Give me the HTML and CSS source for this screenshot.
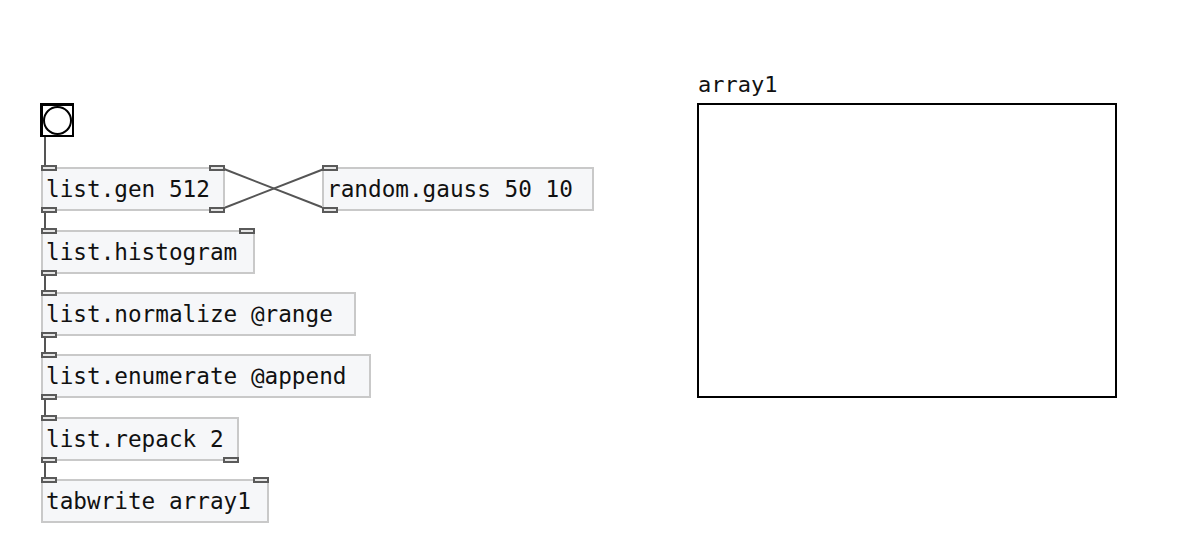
FILE: index.html
```html
<!DOCTYPE html>
<html>
<head>
<meta charset="utf-8">
<link rel="stylesheet" href="styles.css">
</head>
<body>
<div class="canvas">
  <svg class="cords" width="1198" height="557" viewBox="0 0 1198 557">
    <g stroke="#555" stroke-width="2" fill="none">
      <line x1="45" y1="136" x2="45" y2="168"/>
      <line x1="45" y1="210" x2="45" y2="231"/>
      <line x1="45" y1="273" x2="45" y2="293"/>
      <line x1="45" y1="336" x2="45" y2="355"/>
      <line x1="45" y1="398" x2="45" y2="418"/>
      <line x1="45" y1="460" x2="45" y2="480"/>
      <line x1="224" y1="169" x2="324" y2="208"/>
      <line x1="224" y1="208" x2="324" y2="169"/>
    </g>
  </svg>

  <div class="bang"><div class="bang-circle"></div></div>

  <div class="obj" style="left:41px;top:167px;width:184px;">list.gen 512
    <span class="io in l"></span><span class="io in r"></span>
    <span class="io out l"></span><span class="io out r"></span>
  </div>
  <div class="obj" style="left:322px;top:167px;width:272px;">random.gauss 50 10
    <span class="io in l"></span><span class="io out l"></span>
  </div>
  <div class="obj" style="left:41px;top:230px;width:214px;">list.histogram
    <span class="io in l"></span><span class="io in r"></span>
    <span class="io out l"></span>
  </div>
  <div class="obj" style="left:41px;top:292px;width:315px;">list.normalize @range
    <span class="io in l"></span><span class="io out l"></span>
  </div>
  <div class="obj" style="left:41px;top:354px;width:330px;">list.enumerate @append
    <span class="io in l"></span><span class="io out l"></span>
  </div>
  <div class="obj" style="left:41px;top:417px;width:198px;">list.repack 2
    <span class="io in l"></span>
    <span class="io out l"></span><span class="io out r"></span>
  </div>
  <div class="obj" style="left:41px;top:479px;width:228px;">tabwrite array1
    <span class="io in l"></span><span class="io in r"></span>
  </div>

  <div class="array-label">array1</div>
  <div class="array-box"></div>
</div>
</body>
</html>
```
FILE: styles.css
```css
html, body {
  margin: 0;
  padding: 0;
  background: #ffffff;
}
.canvas {
  position: relative;
  width: 1198px;
  height: 557px;
  overflow: hidden;
  font-family: "DejaVu Sans Mono", "Liberation Mono", monospace;
}
.cords {
  position: absolute;
  left: 0;
  top: 0;
}
.bang {
  position: absolute;
  left: 40px;
  top: 103px;
  width: 34px;
  height: 34px;
  box-sizing: border-box;
  border: 2px solid #000;
  border-top-width: 3px;
  border-left-width: 3px;
  background: #fff;
  display: flex;
  align-items: center;
  justify-content: center;
}
.bang-circle {
  width: 29px;
  height: 29px;
  box-sizing: border-box;
  border: 2px solid #000;
  border-radius: 50%;
}
.obj {
  position: absolute;
  height: 44px;
  box-sizing: border-box;
  border: 2px solid #c9c9c9;
  background: #f6f7f9;
  color: #111;
  font-size: 22.7px;
  line-height: 41px;
  padding-left: 3px;
  white-space: pre;
}
.io {
  position: absolute;
  width: 16px;
  height: 6px;
  box-sizing: border-box;
  border: 2px solid #5a5a5a;
  background: #e6e6e6;
}
.io.in { top: -4px; }
.io.out { bottom: -4px; }
.io.l { left: -2px; }
.io.r { right: -2px; }
.array-label {
  position: absolute;
  left: 698px;
  top: 71px;
  font-size: 22px;
  line-height: 28px;
  color: #111;
}
.array-box {
  position: absolute;
  left: 697px;
  top: 103px;
  width: 420px;
  height: 295px;
  box-sizing: border-box;
  border: 2px solid #000;
  background: #fff;
}
```
